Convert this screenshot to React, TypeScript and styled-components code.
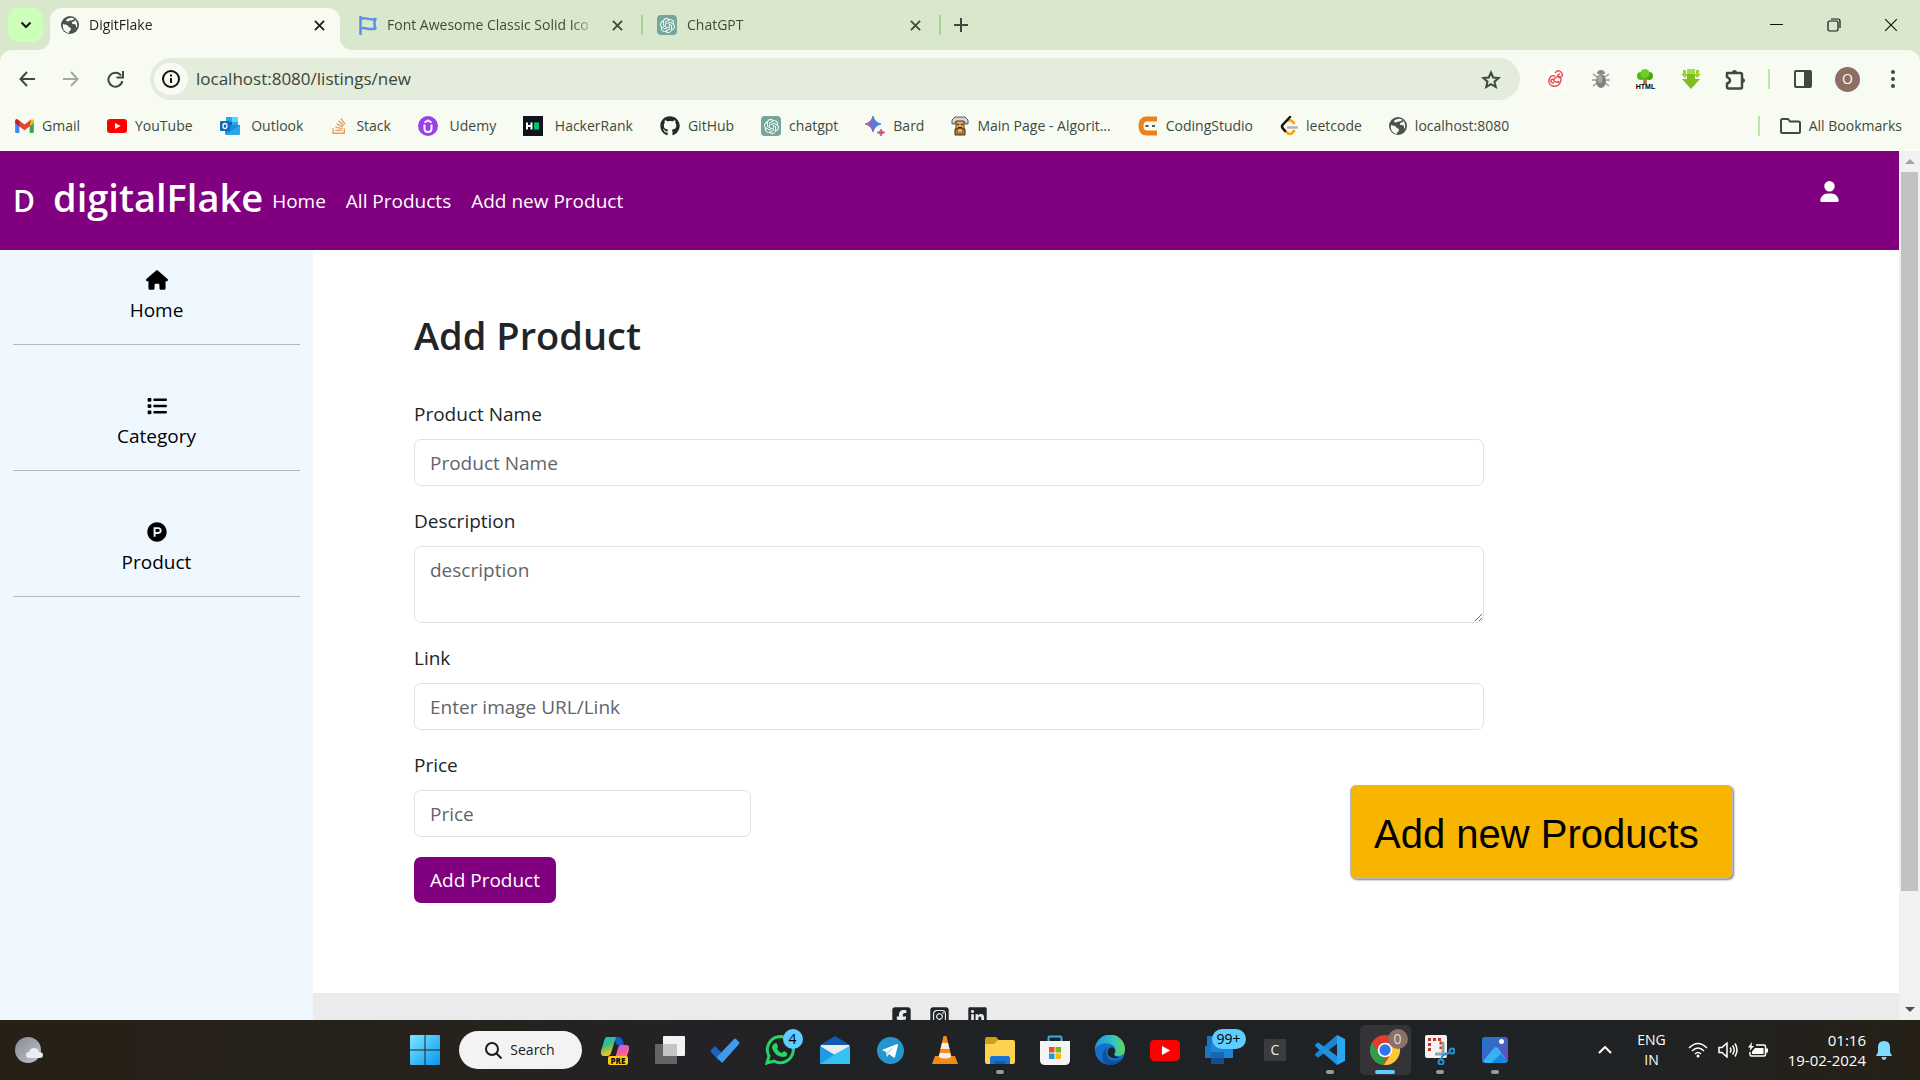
import React from "react";
import styled, { createGlobalStyle, css } from "styled-components";
import {
  FaHouse,
  FaList,
  FaProductHunt,
  FaUser,
  FaSquareFacebook,
  FaSquareInstagram,
  FaLinkedin,
  FaGithub,
  FaStackOverflow,
} from "react-icons/fa6";
import { SiOpenai } from "react-icons/si";

const uiFont = `"Open Sans", "Noto Sans", sans-serif`;

const GlobalStyle = createGlobalStyle`
  *, *::before, *::after { box-sizing: border-box; }
  body {
    margin: 0;
    font-family: ${uiFont};
    font-size: 19px;
    line-height: 30px;
    color: #212529;
    background: #fff;
  }
  button { font: inherit; color: inherit; border: 0; padding: 0; background: none; cursor: pointer; }
  a { color: inherit; text-decoration: none; }
  ul { list-style: none; margin: 0; padding: 0; }
  svg { display: block; flex: none; }
`;

const Desktop = styled.div`
  display: flex;
  flex-direction: column;
  height: 100vh;
  overflow: hidden;
`;

/* ---------- Browser ---------- */

const Browser = styled.div`
  flex: none;
  background: #d9e8cc;
  color: #3d4a3d;
  font-size: 14px;
  line-height: 20px;
`;

const TabStrip = styled.div`
  display: flex;
  align-items: center;
  height: 50px;
  padding-left: 8px;
`;

const TabSearch = styled.button`
  display: grid;
  place-items: center;
  width: 35px;
  height: 34px;
  margin-right: 7px;
  border-radius: 10px;
  background: #ccffb8;
  color: #111;
`;

const activeTab = css`
  background: #f8fbf1;
  color: #1f1f1f;
  &::before,
  &::after {
    content: "";
    position: absolute;
    bottom: 0;
    width: 12px;
    height: 12px;
  }
  &::before {
    left: -12px;
    background: radial-gradient(circle at 0 0, transparent 12px, #f8fbf1 12px);
  }
  &::after {
    right: -12px;
    background: radial-gradient(circle at 100% 0, transparent 12px, #f8fbf1 12px);
  }
`;

const Tab = styled.div<{ $active?: boolean }>`
  position: relative;
  display: flex;
  align-items: center;
  align-self: flex-end;
  gap: 10px;
  width: 290px;
  height: 42px;
  padding: 0 11px 8px 11px;
  border-radius: 12px 12px 0 0;
  ${(p) => p.$active && activeTab}
`;

const TabTitle = styled.span`
  flex: 1;
  white-space: nowrap;
  mask-image: linear-gradient(to right, #000 88%, transparent);
`;

const IconButton = styled.button<{ $size?: number }>`
  display: grid;
  place-items: center;
  flex: none;
  width: ${(p) => p.$size ?? 20}px;
  height: ${(p) => Math.min(p.$size ?? 20, 42)}px;
`;

const TabDivider = styled.span<{ $hidden?: boolean }>`
  flex: none;
  width: 2px;
  height: 20px;
  margin: 0 3px;
  background: ${(p) => (p.$hidden ? "transparent" : "#a3d494")};
`;

const WindowControls = styled.div`
  display: flex;
  margin-left: auto;
  padding-right: 1px;
  color: #111;
`;

const WindowButton = styled.button`
  display: grid;
  place-items: center;
  width: 57px;
  height: 50px;
`;

const Toolbar = styled.div`
  display: flex;
  align-items: center;
  padding: 8px 5px;
  border-radius: 12px 12px 0 0;
  background: #f8fbf1;
`;

const AddressBar = styled.div`
  display: flex;
  align-items: center;
  flex: 1;
  height: 42px;
  margin: 0 13px;
  padding: 0 12px 0 4px;
  border-radius: 21px;
  background: #e4ecdb;
`;

const SiteInfo = styled.button`
  display: grid;
  place-items: center;
  width: 34px;
  height: 32px;
  border-radius: 16px;
  background: #f8fbf1;
  color: #111;
`;

const Address = styled.input`
  flex: 1;
  min-width: 0;
  padding: 0 8px;
  border: 0;
  outline: 0;
  background: none;
  font: 17px/24px ${uiFont};
  color: #3a4538;
`;

const Extensions = styled.div`
  display: flex;
  align-items: center;
  color: #3d4a3d;
`;

const ToolbarDivider = styled.span<{ $tone: string; $gap: number }>`
  width: 2px;
  height: 20px;
  margin: 0 ${(p) => p.$gap}px;
  background: ${(p) => p.$tone};
`;

const Avatar = styled.span`
  display: grid;
  place-items: center;
  width: 25px;
  height: 25px;
  border-radius: 50%;
  background: #8d6e63;
  color: #fff;
`;

const BookmarksBar = styled.nav`
  display: flex;
  align-items: center;
  padding: 0 18px 5px 15px;
  border-bottom: 2px solid #fdfdf6;
  background: #f8fbf1;
`;

const BookmarkList = styled.ul`
  display: flex;
  gap: 27px;
  margin-right: auto;
`;

const Bookmark = styled.a`
  display: flex;
  align-items: center;
  gap: 8px;
  height: 36px;
  white-space: pre;
`;

/* ---------- Web page ---------- */

const Viewport = styled.div`
  display: flex;
  flex: 1;
  min-height: 0;
  position: relative;
`;

const Page = styled.div`
  display: flex;
  flex-direction: column;
  flex: 1;
  min-width: 0;
  overflow: hidden;
`;

const Navbar = styled.header`
  display: flex;
  flex: none;
  justify-content: space-between;
  align-items: flex-start;
  padding: 20px 59px 19px 13px;
  background: purple;
  color: #fff;
`;

const NavGroup = styled.nav`
  display: flex;
  align-items: center;
  gap: 20px;
  height: 60px;
  font-weight: 500;
`;

const LogoLetter = styled.span`
  font-size: 30px;
  font-weight: 600;
`;

const Brand = styled.a`
  margin: 0 -11px 8px -2px;
  font-size: 38px;
  line-height: 50px;
  font-weight: 600;
`;

const ProfileLink = styled.a`
  padding-top: 10px;
`;

const Body = styled.div`
  display: flex;
  flex: 1;
`;

const Sidebar = styled.aside`
  flex: none;
  width: 313px;
  padding: 15px 13px;
  background: #f0f8ff;
`;

const SideList = styled.ul`
  display: flex;
  flex-direction: column;
  gap: 46px;
`;

const SideLink = styled.a`
  display: flex;
  flex-direction: column;
  align-items: center;
  padding-bottom: 19px;
  border-bottom: 1px solid #b4bac0;
  color: #000;
`;

const SideIcon = styled.span`
  display: grid;
  place-items: center;
  height: 30px;
  font-size: 20px;
`;

const Main = styled.main`
  display: flex;
  flex-direction: column;
  flex: 1;
`;

const ProductForm = styled.form`
  display: flex;
  flex-direction: column;
  align-items: flex-start;
  gap: 20px;
  padding: 61px 415px 90px 101px;
`;

const Title = styled.h1`
  margin: 0 0 20px;
  font-size: 38px;
  line-height: 48px;
  font-weight: 600;
`;

const Field = styled.label`
  display: flex;
  flex-direction: column;
  gap: 10px;
  width: 100%;
`;

const control = css`
  display: block;
  width: 100%;
  padding: 8px 15px;
  border: 1px solid #dee2e6;
  border-radius: 7px;
  background: #fff;
  font: inherit;
  color: #212529;
  &::placeholder {
    color: #5f656b;
    opacity: 1;
  }
`;

const TextInput = styled.input<{ $short?: boolean }>`
  ${control}
  height: 47px;
  ${(p) => p.$short && "max-width: 337px;"}
`;

const TextArea = styled.textarea`
  ${control}
  height: 77px;
  resize: vertical;
`;

const SubmitButton = styled.button`
  padding: 8px 16px;
  border-radius: 7px;
  background: purple;
  color: #fff;
`;

const Footer = styled.footer`
  display: flex;
  flex: 1;
  justify-content: center;
  gap: 17px;
  padding: 13px 334px 0 0;
  background: #ebebeb;
  font-size: 21px;
`;

const Scrollbar = styled.div`
  display: flex;
  flex-direction: column;
  align-items: center;
  flex: none;
  width: 21px;
  background: #f1f1f1;
`;

const ScrollArrow = styled.button<{ $down?: boolean }>`
  display: grid;
  place-items: center;
  width: 21px;
  height: 21px;
  &::before {
    content: "";
    border: 5px solid transparent;
    ${(p) => (p.$down ? "border-top: 5px solid #505050; border-bottom: 0;" : "border-bottom: 5px solid #a3a3a3; border-top: 0;")}
  }
`;

const ScrollTrack = styled.div`
  flex: 1;
  width: 17px;
`;

const ScrollThumb = styled.div`
  height: 87%;
  background: #c1c1c1;
`;

const Callout = styled.div`
  position: absolute;
  right: 187px;
  bottom: 141px;
  width: 383px;
  padding: 24px 23px 20px;
  border: 1px solid #b9b9b9;
  border-radius: 6px;
  background: #f7b500;
  box-shadow: 1px 1px 2px rgba(0, 0, 0, 0.5);
  color: #000;
  font: 40px/48px "Liberation Sans", Arial, sans-serif;
  white-space: nowrap;
`;

/* ---------- Taskbar ---------- */

const Taskbar = styled.div`
  display: grid;
  grid-template-columns: 1fr auto 1fr;
  align-items: center;
  flex: none;
  height: 60px;
  background: linear-gradient(90deg, #262016, #26221d 25%, #232226 35%, #1f2224 55%, #202224 85%, #262016);
  color: #fff;
  font-size: 15px;
  line-height: 20px;
`;

const Weather = styled.button`
  justify-self: start;
  margin-left: 14px;
`;

const Pinned = styled.div`
  display: flex;
  align-items: center;
`;

const AppButton = styled.button<{ $active?: boolean }>`
  position: relative;
  display: grid;
  place-items: center;
  width: 51px;
  height: 50px;
  margin: 0 2px;
  border-radius: 5px;
  background: ${(p) => (p.$active ? "#343336" : "none")};
`;

const RunningMark = styled.span<{ $active?: boolean }>`
  position: absolute;
  bottom: 1px;
  left: 50%;
  transform: translateX(-50%);
  width: ${(p) => (p.$active ? 20 : 8)}px;
  height: 4px;
  border-radius: 2px;
  background: ${(p) => (p.$active ? "#60cdff" : "#9a9a9a")};
`;

const Badge = styled.span<{ $tone?: string }>`
  position: absolute;
  top: 4px;
  left: 28px;
  min-width: 20px;
  padding: 0 5px;
  border-radius: 10px;
  background: ${(p) => p.$tone ?? "#60cdff"};
  color: ${(p) => (p.$tone ? "#ddd" : "#000")};
  font-size: 14px;
  line-height: 20px;
`;

const WideBadge = styled(Badge)`
  left: 17px;
`;

const SearchButton = styled.button`
  display: flex;
  align-items: center;
  justify-content: center;
  gap: 8px;
  width: 123px;
  height: 38px;
  margin: 0 6px;
  border-radius: 19px;
  background: #f3f3f3;
  color: #1b1b1b;
  font-size: 14px;
`;

const Tray = styled.div`
  display: flex;
  align-items: center;
  justify-content: flex-end;
  padding-right: 26px;
`;

const Language = styled.button`
  margin: 0 22px 0 22px;
  text-align: center;
  font-size: 14px;
`;

const Status = styled.button`
  display: flex;
  gap: 10px;
`;

const Clock = styled.button`
  margin: 0 8px 0 20px;
  text-align: right;
`;

/* ---------- Drawings ---------- */

const line = { fill: "none", stroke: "currentColor", strokeWidth: 2 } as const;

const Cross = ({ size = 12, width = 2 }: { size?: number; width?: number }) => (
  <svg width={size} height={size} viewBox="0 0 12 12" {...line} strokeWidth={width}>
    <path d="M1 1l10 10M11 1L1 11" />
  </svg>
);

const GlobeIcon = () => (
  <svg width="18" height="18" viewBox="0 0 18 18">
    <circle cx="9" cy="9" r="9" fill="#4b5250" />
    <path d="M2 8c2 1 4 0 5 2s3 1 3 3-2 1-2 4C4 16.500 1 13 2 8zM9 2c2-.5 4 .3 5.500 1.800C14 6 11 5 11 7s4 0 4 3 1 1 1 1c1-4-1-7-3-8-1 2-4 1-5 2s-3 0-3-1c1-1 2-2 4-2z" fill="#f8fbf1" />
  </svg>
);

const FlagIcon = () => (
  <svg width="18" height="19" viewBox="0 0 18 19" fill="none" stroke="#5b92e5" strokeWidth="2.500" strokeLinejoin="round">
    <path d="M1.500 0v19" />
    <path d="M1.500 3c5-3 7 2 15 0-1.500 3-1.500 6 0 9.500-8 2-10-2-15 0" />
  </svg>
);

const GptBox = styled.span`
  display: grid;
  place-items: center;
  flex: none;
  width: 20px;
  height: 20px;
  border-radius: 4px;
  background: #74a69a;
  color: #fff;
  font-size: 15px;
`;

const GptIcon = () => (
  <GptBox>
    <SiOpenai />
  </GptBox>
);

const GmailIcon = () => (
  <svg width="19" height="14" viewBox="0 0 20 15">
    <path d="M0 2v12q0 1 1 1h3.500V5z" fill="#4285f4" />
    <path d="M20 2v12q0 1-1 1h-3.500V5z" fill="#34a853" />
    <path d="M15.500 1.500L18 .3Q20 0 20 2.500V4l-4.500 4z" fill="#fbbc04" />
    <path d="M0 4V2.500Q0-.5 3 .5L10 6l7-5.500-1.500 7.500L10 12 4.500 8z" fill="#ea4335" />
    <path d="M0 2.500Q0 0 2 .3l2.500 1.700v6L0 4z" fill="#c5221f" />
  </svg>
);

const YouTubeIcon = ({ size = 20 }: { size?: number }) => (
  <svg width={size} height={size * 0.7} viewBox="0 0 20 14">
    <rect width="20" height="14" rx="3" fill="#f00" />
    <path d="M8 4l5.500 3L8 10z" fill="#fff" />
  </svg>
);

const OutlookIcon = () => (
  <svg width="20" height="18" viewBox="0 0 20 18">
    <path d="M6 0h12v9H6z" fill="#28a8ea" />
    <path d="M12 0h6v5h-6z" fill="#50d9ff" />
    <path d="M6 5h6v5H6z" fill="#0364b8" />
    <path d="M5 8l15 0v8q0 2-2 2H7q-2 0-2-2z" fill="#1490df" />
    <path d="M5 18L20 8v8q0 2-2 2z" fill="#28a8ea" />
    <rect y="4" width="10" height="10" rx="1" fill="#0f6cbd" />
    <ellipse cx="5" cy="9" rx="2" ry="2.500" fill="none" stroke="#fff" strokeWidth="1.300" />
  </svg>
);

const UdemyIcon = () => (
  <svg width="20" height="20" viewBox="0 0 20 20">
    <circle cx="10" cy="10" r="10" fill="#9b3fe8" />
    <path d="M6.500 8.500v4q0 3.500 3.500 3.500t3.500-3.500v-4M6.500 6.500L10 4.500l3.500 2" fill="none" stroke="#fff" strokeWidth="2" />
  </svg>
);

const HackerRankIcon = () => (
  <svg width="20" height="20" viewBox="0 0 20 20">
    <path d="M0 0h20v20H0z" fill="#0e141e" />
    <path d="M4 6.500v7M8.500 6.500v7M4 10h4.500" stroke="#fff" strokeWidth="2" />
    <path d="M11 6.500h5v7h-5z" fill="#05c770" />
  </svg>
);

const BardIcon = () => (
  <svg width="20" height="20" viewBox="0 0 20 20">
    <defs>
      <linearGradient id="bard" x1="0" x2="1">
        <stop offset="0" stopColor="#c9607a" />
        <stop offset=".5" stopColor="#6a70d8" />
        <stop offset="1" stopColor="#1ba0e0" />
      </linearGradient>
    </defs>
    <path d="M8 0q1.500 6.500 8 8-6.500 1.500-8 8-1.500-6.500-8-8 6.500-1.500 8-8z" fill="url(#bard)" stroke="url(#bard)" strokeWidth="1" />
    <path d="M16 13q.5 3 4 3.500-3.500.5-4 3.500-.5-3-4-3.500 3.500-.5 4-3.500z" fill="#c0607f" stroke="#c0607f" />
  </svg>
);

const SageIcon = () => (
  <svg width="18" height="20" viewBox="0 0 18 20">
    <path d="M4 1h10l3 3v4h-3V6H4v2H1V4z" fill="#d6d6d2" stroke="#555" />
    <path d="M5 5h8v8H5z" fill="#d9a45f" stroke="#5a3c1b" />
    <path d="M6 8h2v1H6zM10 8h2v1h-2zM7 11h4v1H7z" fill="#3a2310" />
    <path d="M4 13h10v6H4z" fill="#a6772c" stroke="#493015" />
    <path d="M7 13h4v3H7z" fill="#e0b070" />
  </svg>
);

const CodingIcon = () => (
  <svg width="20" height="20" viewBox="0 0 20 20">
    <path d="M19 3H9Q3 3 3 10t6 7h10" fill="none" stroke="#f08019" strokeWidth="5" />
    <path d="M6 7h13v6H6z" fill="#f8fbf1" />
    <path d="M7.500 9h3v2h-3zM14 9h3v2h-3z" fill="#555" />
  </svg>
);

const LeetIcon = () => (
  <svg width="18" height="20" viewBox="0 0 18 20" fill="none" strokeWidth="2.500" strokeLinecap="round">
    <path d="M14 7l-2-2q-2-1.500-4 0M14 15l-2 2q-2 2-4.500 0l-3-3" stroke="#ffa116" />
    <path d="M10 1L3 8.500q-2 2 0 4L5 15" stroke="#111" />
    <path d="M8 11.500h9" stroke="#b3b3b3" />
  </svg>
);

const FolderIcon = () => (
  <svg width="21" height="16" viewBox="0 0 21 16" {...line}>
    <path d="M1 2.500Q1 1 2.500 1H8l2 2.500h8.500Q20 3.500 20 5v8.500q0 1.500-1.500 1.500h-16Q1 15 1 13.500z" />
  </svg>
);

const SwirlIcon = () => (
  <svg width="20" height="20" viewBox="0 0 20 20" fill="none" stroke="#e8504e" strokeWidth="1.500">
    <path fill="#fff" stroke="none" d="M0 0h20v20H0z" />
    <path d="M9 4q3-4 6-1t0 5q-2 1.500-3-.5T14 5M9 7q-5-1-6 4t4 6 7-3 0-6-5 1 1 4 2-1M8 10q-3 0-3 2t3 2" />
  </svg>
);

const BugIcon = () => (
  <svg width="18" height="20" viewBox="0 0 18 20">
    <path d="M1 5l4 3M17 5l-4 3M0 11h4M18 11h-4M1 17l4-3M17 17l-4-3" stroke="#999" strokeWidth="1.500" />
    <path d="M5 5q0-4 4-4t4 4z" fill="#8b8b8b" />
    <ellipse cx="9" cy="12" rx="5" ry="7" fill="#808080" />
    <ellipse cx="8" cy="10" rx="2.500" ry="4" fill="#a8a8a8" />
  </svg>
);

const TreeStack = styled.span`
  display: flex;
  flex-direction: column;
  align-items: center;
  color: #000;
  font: 700 7px/6px "Liberation Sans", Arial, sans-serif;
`;

const TreeIcon = () => (
  <TreeStack>
    <svg width="18" height="15" viewBox="0 0 18 15">
      <path d="M7.500 8h3l.5 7H7z" fill="#b5702a" />
      <circle cx="5" cy="7" r="4" fill="#54b51a" />
      <circle cx="13" cy="7" r="4" fill="#48a814" />
      <circle cx="9" cy="4.500" r="4.500" fill="#6fce2a" />
    </svg>
    HTML
  </TreeStack>
);

const DownloadIcon = () => (
  <svg width="20" height="20" viewBox="0 0 20 20">
    <path d="M2 1h3v4h2L4 9 0 5h2zM15 1h3v4h2l-4 4-3-4h2z" fill="#9bd03a" />
    <path d="M6 0h8v10h5l-9 10-9-10h5z" fill="#7fbe1f" />
    <path d="M6 0h8v5H6z" fill="#a5dc4b" />
  </svg>
);

const PuzzleIcon = () => (
  <svg width="21" height="21" viewBox="0 0 21 21" {...line} strokeWidth="2.500">
    <path strokeLinejoin="round" d="M2 4h13.500q1.500 0 1.500 1.500V18q0 1.500-1.500 1.500H3.500Q2 19.500 2 18v-3.500q3-1 3-3T2 8z" />
    <path fill="currentColor" stroke="none" d="M7 4a2.500 3 0 015 0zM17 9a3 2.500 0 010 5z" />
  </svg>
);

const CloudMoon = () => (
  <svg width="30" height="28" viewBox="0 0 30 28">
    <defs>
      <linearGradient id="moon" y2="1">
        <stop offset="0" stopColor="#858a94" />
        <stop offset="1" stopColor="#c0c4cb" />
      </linearGradient>
    </defs>
    <circle cx="14" cy="14" r="13" fill="url(#moon)" />
    <path d="M15 22q-3 0-3-3t3-3q1-4 5-4t5 4q4 0 4 3t-3 3z" fill="#e9edf3" />
  </svg>
);

const WindowsIcon = () => (
  <svg width="30" height="30" viewBox="0 0 30 30">
    <defs>
      <linearGradient id="win" x2="1" y2="1">
        <stop offset="0" stopColor="#7be8ff" />
        <stop offset="1" stopColor="#0a95f2" />
      </linearGradient>
    </defs>
    <path fill="url(#win)" d="M1 0h13.500v14.500H0V1q0-1 1-1zM15.500 0H29q1 0 1 1v13.500H15.500zM0 15.500h14.500V30H1q-1 0-1-1zM15.500 15.500H30V29q0 1-1 1H15.500z" />
  </svg>
);

const PreTag = styled.span`
  position: absolute;
  left: 18px;
  bottom: 10px;
  padding: 0 3px;
  border-radius: 2px;
  background: #ffc91a;
  color: #111;
  font-size: 8px;
  line-height: 9px;
  font-weight: 800;
`;

const CopilotIcon = () => (
  <svg width="30" height="28" viewBox="0 0 30 28">
    <defs>
      <linearGradient id="cpa" x2=".3" y2="1">
        <stop offset="0" stopColor="#21b5e8" />
        <stop offset=".5" stopColor="#3cbf79" />
        <stop offset="1" stopColor="#fbc51b" />
      </linearGradient>
      <linearGradient id="cpb" x2=".3" y2="1">
        <stop offset="0" stopColor="#b167f0" />
        <stop offset=".5" stopColor="#f05aa0" />
        <stop offset="1" stopColor="#ff9142" />
      </linearGradient>
    </defs>
    <path d="M8 1h10q4 0 5 5l1 3h-7l-3-6z" fill="#1b5bd0" />
    <path d="M7 1h9l-5 16q-1 3-4 3H4q-4 0-3-5L4 5q1-4 3-4z" fill="url(#cpa)" />
    <path d="M20 9h6q4 0 3 5l-3 9q-1 3-4 3h-8l4-14q1-3 2-3z" fill="url(#cpb)" />
  </svg>
);

const TaskViewIcon = () => (
  <svg width="30" height="28" viewBox="0 0 30 28">
    <rect x="8" width="22" height="20" rx="1" fill="#f3f3f3" />
    <rect y="8" width="22" height="20" rx="1" fill="#777" opacity=".8" />
    <path d="M8 8h14v12H8z" fill="#c4c4c4" />
  </svg>
);

const TodoIcon = () => (
  <svg width="30" height="26" viewBox="0 0 30 26">
    <path d="M5 9l9 9-5 6-8-9q-1-1 0-2z" fill="#1f5fc4" />
    <path d="M7 20L24 2q1-1 2 0l3 3q1 1 0 2L13 25q-1 1-2 0z" fill="#3f9bee" />
  </svg>
);

const WhatsAppIcon = () => (
  <svg width="30" height="30" viewBox="0 0 30 30">
    <path d="M2 28l2-7a13 13 0 115 5z" fill="none" stroke="#25d366" strokeWidth="3" />
    <path d="M9 9q2-2 3 0l1 3-1 2q2 3 5 4l2-2 3 2q1 3-3 4-9 0-12-9 0-3 2-4z" fill="#25d366" />
  </svg>
);

const MailIcon = () => (
  <svg width="30" height="28" viewBox="0 0 30 28">
    <path d="M0 9L15 0l15 9v3H0z" fill="#0f5bb0" />
    <path d="M1 9h28v10H1z" fill="#e9eef5" />
    <path d="M0 10l15 9L30 10v18H0z" fill="#1f9be6" />
    <path d="M0 28l15-10L30 10v18z" fill="#35c1f1" />
  </svg>
);

const TelegramIcon = () => (
  <svg width="27" height="27" viewBox="0 0 27 27">
    <circle cx="13.500" cy="13.500" r="13.500" fill="#2496cf" />
    <path d="M5 13l15-6q1 0 1 1l-3 12q-.5 1-1.500.5L12 17l-2 3-1-5z" fill="#fff" />
    <path d="M9.500 15L18 9l-6.500 7-1.500 3z" fill="#b5d9ef" />
  </svg>
);

const VlcIcon = () => (
  <svg width="26" height="30" viewBox="0 0 26 30">
    <path d="M3 21h20l3 8H0z" fill="#f08a12" />
    <path d="M11.500 1h3L20 24q-7 4-14 0z" fill="#f58a1f" />
    <path d="M10 8h6l1.500 6h-7-2zM7.800 18h10.400l1 4q-6 3-12.400 0z" fill="#f3f0ea" />
  </svg>
);

const ExplorerIcon = () => (
  <svg width="30" height="27" viewBox="0 0 30 27">
    <path d="M0 2q0-2 2-2h9l3 3-3 6H0z" fill="#d59a16" />
    <path d="M13 3h15q2 0 2 2v20q0 2-2 2H2q-2 0-2-2V7h9z" fill="#fdd251" />
    <path d="M5 27v-6q0-2 2-2h16q2 0 2 2v6z" fill="#1773cf" />
    <path d="M10 27v-3h10v3z" fill="#0f5bab" />
  </svg>
);

const StoreIcon = () => (
  <svg width="30" height="30" viewBox="0 0 30 30">
    <path d="M8.500 7V2.500Q8.500 1.500 9.500 1.500h11q1 0 1 1V7" fill="none" stroke="#2fb1e8" strokeWidth="2" />
    <path d="M0 6h30v19q0 5-5 5H5q-5 0-5-5z" fill="#f4f4f4" />
    <path d="M9 12h5.500v5.500H9z" fill="#e6511f" />
    <path d="M15.500 12H21v5.500h-5.500z" fill="#7db813" />
    <path d="M9 18.500h5.500V24H9z" fill="#0f9de4" />
    <path d="M15.500 18.500H21V24h-5.500z" fill="#fbb60f" />
  </svg>
);

const EdgeIcon = () => (
  <svg width="30" height="30" viewBox="0 0 30 30">
    <defs>
      <linearGradient id="edge" x2="1">
        <stop offset="0" stopColor="#1e96de" />
        <stop offset=".6" stopColor="#31c4c4" />
        <stop offset="1" stopColor="#62d84e" />
      </linearGradient>
    </defs>
    <circle cx="15" cy="15" r="15" fill="#1570c8" />
    <path d="M0 15A15 15 0 0130 14q0 7-7 7-4 0-4-2c2-2 2-4 1-6-4-7-17-6-20 2z" fill="url(#edge)" />
    <path d="M11 17c0 9 9 11 17 6q-4 7-13 7C5 29 5 17 13 12q-2 2-2 5z" fill="#0f4fa0" />
    <path d="M19 13q2 4 0 6 0 3 5 3-2 2-6 1-7-2-5-8 2-4 6-2z" fill="#1f2224" />
  </svg>
);

const PhoneIcon = () => (
  <svg width="30" height="28" viewBox="0 0 30 28">
    <path d="M2 0h13v22H0V10h2z" fill="#1a78c2" />
    <path d="M6 8h22v14H6z" fill="#1d86d6" />
    <path d="M6 16h13v12H6z" fill="#0d4f8f" />
    <path d="M6 16h13v6H6z" fill="#1668b2" />
  </svg>
);

const LetterTile = styled.span`
  display: grid;
  place-items: center;
  width: 22px;
  height: 22px;
  background: #3c3c3f;
  color: #eee;
  font-size: 14px;
`;

const CodeIcon = () => (
  <svg width="30" height="30" viewBox="0 0 30 30">
    <path d="M22 0l8 4v22l-8 4z" fill="#2aa5f2" />
    <path d="M22 0v9L4 22q-1 1-2 0l-2-2q0-1 1-2z" fill="#1c84cf" />
    <path d="M22 30v-9L4 8Q3 7 2 8l-2 2q0 1 1 2z" fill="#2292e0" />
  </svg>
);

const ChromeIcon = () => (
  <svg width="30" height="30" viewBox="0 0 30 30">
    <circle cx="15" cy="15" r="15" fill="#e33b2e" />
    <path d="M2 7.500L9 18.500l6 3.500-1 8A15 15 0 012 7.500z" fill="#2f9e4b" />
    <path d="M15 8h13.200A15 15 0 0114 30l7-11.500z" fill="#fcc934" />
    <circle cx="15" cy="15" r="7.300" fill="#fff" />
    <circle cx="15" cy="15" r="5.700" fill="#2f76e8" />
  </svg>
);

const SnipIcon = () => (
  <svg width="30" height="30" viewBox="0 0 30 30">
    <rect width="22" height="23" rx="2" fill="#f2f2f2" />
    <path d="M4.500 16V4.500H16V14" fill="none" stroke="#c8341f" strokeWidth="3" strokeDasharray="3 2" />
    <path d="M18 7v13M10 19h12" stroke="#98a0a6" strokeWidth="3" />
    <circle cx="16" cy="27" r="2.500" fill="none" stroke="#2392d8" strokeWidth="2" />
    <circle cx="27" cy="16" r="2.500" fill="none" stroke="#2392d8" strokeWidth="2" />
    <path d="M16 24l2-4 6-2" fill="none" stroke="#2392d8" strokeWidth="2" />
  </svg>
);

const PhotosIcon = () => (
  <svg width="26" height="26" viewBox="0 0 26 26">
    <defs>
      <linearGradient id="photo" x2="1" y2="1">
        <stop offset="0" stopColor="#1b7ad0" />
        <stop offset="1" stopColor="#6a4bb8" />
      </linearGradient>
    </defs>
    <rect width="26" height="26" rx="3" fill="url(#photo)" />
    <path d="M1 24L12 11q2-2 4 0l9 13q-1 2-3 2H4q-2 0-3-2z" fill="#35b3f3" />
    <path d="M9 26l10-9 6 7q-1 2-3 2z" fill="#1a86dd" />
    <circle cx="19.500" cy="4.500" r="2.500" fill="#fff" />
  </svg>
);

/* ---------- Data ---------- */

const bookmarks: { name: string; icon: React.ReactNode }[] = [
  { name: "Gmail", icon: <GmailIcon /> },
  { name: "YouTube", icon: <YouTubeIcon /> },
  { name: " Outlook", icon: <OutlookIcon /> },
  { name: "Stack", icon: <FaStackOverflow size={18} color="#e99a63" /> },
  { name: " Udemy", icon: <UdemyIcon /> },
  { name: " HackerRank", icon: <HackerRankIcon /> },
  { name: "GitHub", icon: <FaGithub size={20} color="#24292e" /> },
  { name: "chatgpt", icon: <GptIcon /> },
  { name: "Bard", icon: <BardIcon /> },
  { name: "Main Page - Algorit...", icon: <SageIcon /> },
  { name: "CodingStudio", icon: <CodingIcon /> },
  { name: "leetcode", icon: <LeetIcon /> },
  { name: "localhost:8080", icon: <GlobeIcon /> },
];

const sideLinks = [
  { name: "Home", icon: <FaHouse size={22} /> },
  { name: "Category", icon: <FaList /> },
  { name: "Product", icon: <FaProductHunt /> },
];

const apps: {
  name: string;
  icon: React.ReactNode;
  running?: boolean;
  active?: boolean;
  extra?: React.ReactNode;
}[] = [
  { name: "Copilot", icon: <CopilotIcon />, extra: <PreTag>PRE</PreTag> },
  { name: "Task View", icon: <TaskViewIcon /> },
  { name: "To Do", icon: <TodoIcon /> },
  { name: "WhatsApp", icon: <WhatsAppIcon />, extra: <Badge>4</Badge> },
  { name: "Mail", icon: <MailIcon /> },
  { name: "Telegram", icon: <TelegramIcon /> },
  { name: "VLC", icon: <VlcIcon /> },
  { name: "File Explorer", icon: <ExplorerIcon />, running: true },
  { name: "Store", icon: <StoreIcon /> },
  { name: "Edge", icon: <EdgeIcon /> },
  { name: "YouTube", icon: <YouTubeIcon size={30} /> },
  { name: "Phone Link", icon: <PhoneIcon />, extra: <WideBadge>99+</WideBadge> },
  { name: "C", icon: <LetterTile>C</LetterTile> },
  { name: "VS Code", icon: <CodeIcon />, running: true },
  { name: "Chrome", icon: <ChromeIcon />, running: true, active: true, extra: <Badge $tone="#8d7068">0</Badge> },
  { name: "Snipping Tool", icon: <SnipIcon />, running: true },
  { name: "Photos", icon: <PhotosIcon />, running: true },
];

/* ---------- Sections ---------- */

const BrowserChrome = () => (
  <Browser>
    <TabStrip>
      <TabSearch aria-label="Search tabs">
        <svg width="12" height="8" viewBox="0 0 12 8" {...line}>
          <path d="M1.500 1.500L6 6l4.500-4.500" />
        </svg>
      </TabSearch>
      <Tab $active>
        <GlobeIcon />
        <TabTitle>DigitFlake</TabTitle>
        <IconButton aria-label="Close tab">
          <Cross size={11} />
        </IconButton>
      </Tab>
      <TabDivider $hidden />
      <Tab>
        <FlagIcon />
        <TabTitle>Font Awesome Classic Solid Ico</TabTitle>
        <IconButton aria-label="Close tab">
          <Cross size={11} />
        </IconButton>
      </Tab>
      <TabDivider />
      <Tab>
        <GptIcon />
        <TabTitle>ChatGPT</TabTitle>
        <IconButton aria-label="Close tab">
          <Cross size={11} />
        </IconButton>
      </Tab>
      <TabDivider />
      <IconButton $size={34} aria-label="New tab">
        <svg width="14" height="14" viewBox="0 0 14 14" {...line}>
          <path d="M7 0v14M0 7h14" />
        </svg>
      </IconButton>
      <WindowControls>
        <WindowButton aria-label="Minimize">
          <svg width="13" height="2" viewBox="0 0 13 2">
            <path d="M0 0h13v1H0z" fill="currentColor" />
          </svg>
        </WindowButton>
        <WindowButton aria-label="Restore">
          <svg width="14" height="14" viewBox="0 0 14 14" {...line} strokeWidth="1.200">
            <rect x="1" y="3" width="10" height="10" rx="1.500" />
            <path d="M4 1h7q2 0 2 2v7" />
          </svg>
        </WindowButton>
        <WindowButton aria-label="Close">
          <Cross size={14} width={1} />
        </WindowButton>
      </WindowControls>
    </TabStrip>

    <Toolbar>
      <IconButton $size={44} aria-label="Back">
        <svg width="16" height="16" viewBox="0 0 16 16" {...line}>
          <path d="M16 8H1.500M8 1L1.500 8 8 15" />
        </svg>
      </IconButton>
      <IconButton $size={44} aria-label="Forward" disabled>
        <svg width="16" height="16" viewBox="0 0 16 16" {...line} stroke="#a5aaa0">
          <path d="M0 8h14.500M8 1l6.500 7L8 15" />
        </svg>
      </IconButton>
      <IconButton $size={44} aria-label="Reload">
        <svg width="17" height="17" viewBox="0 0 17 17" {...line}>
          <path d="M14 4.500a7 7 0 101.300 5.500M16 0v6.500H9.500" />
        </svg>
      </IconButton>
      <AddressBar>
        <SiteInfo aria-label="Site information">
          <svg width="18" height="18" viewBox="0 0 18 18" {...line}>
            <circle cx="9" cy="9" r="8" />
            <path d="M9 8v5M9 4.500v2" />
          </svg>
        </SiteInfo>
        <Address aria-label="Address" defaultValue="localhost:8080/listings/new" />
        <IconButton $size={34} aria-label="Bookmark this tab">
          <svg width="20" height="19" viewBox="0 0 20 19" {...line}>
            <path d="M10 2.500l2.200 5 5.500.5-4.200 3.700 1.300 5.300L10 14.200 5.200 17l1.300-5.300L2.300 8l5.500-.5z" />
          </svg>
        </IconButton>
      </AddressBar>
      <Extensions>
        <IconButton $size={45} aria-label="Swirl extension">
          <SwirlIcon />
        </IconButton>
        <IconButton $size={45} aria-label="Debugger extension">
          <BugIcon />
        </IconButton>
        <IconButton $size={45} aria-label="HTML tree extension">
          <TreeIcon />
        </IconButton>
        <IconButton $size={45} aria-label="Download extension">
          <DownloadIcon />
        </IconButton>
        <IconButton $size={45} aria-label="Extensions">
          <PuzzleIcon />
        </IconButton>
        <ToolbarDivider $tone="#b8e8a8" $gap={10} />
        <IconButton $size={45} aria-label="Side panel">
          <svg width="18" height="18" viewBox="0 0 18 18" {...line}>
            <rect x="1" y="1" width="16" height="16" rx="1" />
            <path d="M10 1h7v16h-7z" fill="currentColor" stroke="none" />
          </svg>
        </IconButton>
        <IconButton $size={45} aria-label="Profile">
          <Avatar>O</Avatar>
        </IconButton>
        <IconButton $size={45} aria-label="Menu">
          <svg width="4" height="18" viewBox="0 0 4 18" fill="currentColor">
            <circle cx="2" cy="2" r="2" />
            <circle cx="2" cy="9" r="2" />
            <circle cx="2" cy="16" r="2" />
          </svg>
        </IconButton>
      </Extensions>
    </Toolbar>

    <BookmarksBar aria-label="Bookmarks">
      <BookmarkList>
        {bookmarks.map((b) => (
          <li key={b.name}>
            <Bookmark href="#">
              {b.icon}
              <span>{b.name}</span>
            </Bookmark>
          </li>
        ))}
      </BookmarkList>
      <ToolbarDivider $tone="#b8e8a8" $gap={20} />
      <Bookmark href="#">
        <FolderIcon />
        <span>All Bookmarks</span>
      </Bookmark>
    </BookmarksBar>
  </Browser>
);

const AddProductPage = () => (
  <Page>
    <Navbar>
      <NavGroup>
        <LogoLetter>D</LogoLetter>
        <Brand href="#">digitalFlake</Brand>
        <a href="#">Home</a>
        <a href="#">All Products</a>
        <a href="#">Add new Product</a>
      </NavGroup>
      <ProfileLink href="#" aria-label="Profile">
        <FaUser size={21} />
      </ProfileLink>
    </Navbar>
    <Body>
      <Sidebar>
        <SideList>
          {sideLinks.map((l) => (
            <li key={l.name}>
              <SideLink href="#">
                <SideIcon>{l.icon}</SideIcon>
                {l.name}
              </SideLink>
            </li>
          ))}
        </SideList>
      </Sidebar>
      <Main>
        <ProductForm onSubmit={(e) => e.preventDefault()}>
          <Title>Add Product</Title>
          <Field>
            Product Name
            <TextInput name="title" placeholder="Product Name" />
          </Field>
          <Field>
            Description
            <TextArea name="description" placeholder="description" />
          </Field>
          <Field>
            Link
            <TextInput name="image" placeholder="Enter image URL/Link" />
          </Field>
          <Field>
            Price
            <TextInput name="price" placeholder="Price" $short />
          </Field>
          <SubmitButton type="submit">Add Product</SubmitButton>
        </ProductForm>
        <Footer>
          <a href="#" aria-label="Facebook">
            <FaSquareFacebook />
          </a>
          <a href="#" aria-label="Instagram">
            <FaSquareInstagram />
          </a>
          <a href="#" aria-label="LinkedIn">
            <FaLinkedin />
          </a>
        </Footer>
      </Main>
    </Body>
  </Page>
);

const WindowsTaskbar = () => (
  <Taskbar>
    <Weather aria-label="Weather">
      <CloudMoon />
    </Weather>
    <Pinned>
      <AppButton aria-label="Start">
        <WindowsIcon />
      </AppButton>
      <SearchButton>
        <svg width="17" height="17" viewBox="0 0 17 17" {...line}>
          <circle cx="7" cy="7" r="6" />
          <path d="M11.500 11.500l5 5" />
        </svg>
        Search
      </SearchButton>
      {apps.map((app) => (
        <AppButton key={app.name} aria-label={app.name} $active={app.active}>
          {app.icon}
          {app.extra}
          {app.running && <RunningMark $active={app.active} />}
        </AppButton>
      ))}
    </Pinned>
    <Tray>
      <IconButton aria-label="Show hidden icons">
        <svg width="14" height="8" viewBox="0 0 14 8" {...line}>
          <path d="M1 7l6-6 6 6" />
        </svg>
      </IconButton>
      <Language>
        ENG
        <br />
        IN
      </Language>
      <Status aria-label="Network, sound and battery">
        <svg width="20" height="16" viewBox="0 0 20 16" {...line} strokeWidth="1.500">
          <path d="M1 6q9-9 18 0M4 9q6-6 12 0M7 12q3-3 6 0" />
          <circle cx="10" cy="14" r="1.500" fill="currentColor" stroke="none" />
        </svg>
        <svg width="20" height="16" viewBox="0 0 20 16" {...line} strokeWidth="1.500">
          <path d="M1 5.500h3L9 1v14l-5-4.500H1zM12 5.500q2 2.500 0 5M14.500 3.500q3.500 4.500 0 9M17 1.500q4 6.500 0 13" />
        </svg>
        <svg width="20" height="16" viewBox="0 0 20 16" {...line} strokeWidth="1.500">
          <path d="M8 3h8q1.500 0 1.500 1.500v8q0 1.500-1.500 1.500H3.500Q2 14 2 12.500V10" />
          <path d="M7 6h8.500v6H4V9.500zM18 6.500h2v4h-2zM4 0L0 5.500h2.500L1.500 9 6 4H3.500z" fill="currentColor" stroke="none" />
        </svg>
      </Status>
      <Clock>
        01:16
        <br />
        19-02-2024
      </Clock>
      <IconButton aria-label="Notifications">
        <svg width="16" height="19" viewBox="0 0 16 19" fill="#7fdcff">
          <path d="M8 0q6 0 6 6v5l2 4H0l2-4V6q0-6 6-6zM5.500 16h5q-.5 3-2.500 3t-2.500-3z" />
        </svg>
      </IconButton>
    </Tray>
  </Taskbar>
);

export default function App() {
  return (
    <Desktop>
      <GlobalStyle />
      <BrowserChrome />
      <Viewport>
        <AddProductPage />
        <Scrollbar>
          <ScrollArrow aria-label="Scroll up" />
          <ScrollTrack>
            <ScrollThumb />
          </ScrollTrack>
          <ScrollArrow $down aria-label="Scroll down" />
        </Scrollbar>
        <Callout>Add new Products</Callout>
      </Viewport>
      <WindowsTaskbar />
    </Desktop>
  );
}
